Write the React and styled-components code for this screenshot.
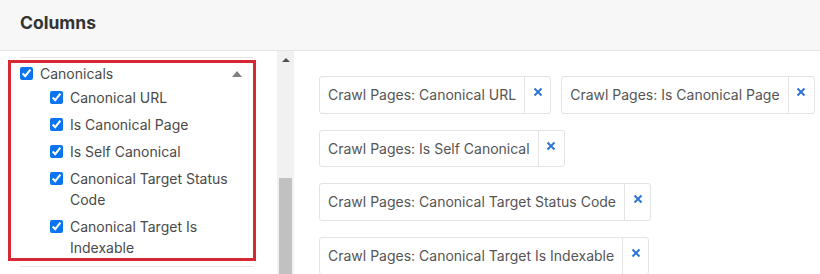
import React from "react";
import styled, { createGlobalStyle } from "styled-components";

const Global = createGlobalStyle`
  html, body { margin: 0; padding: 0; background: #fff; }
  body { font-family: Inter, "Noto Sans", "Liberation Sans", sans-serif; }
  * { box-sizing: border-box; }
`;

const Page = styled.div`
  width: 820px;
  height: 274px;
  overflow: hidden;
  display: flex;
  flex-direction: column;
`;

const Header = styled.header`
  height: 51px;
  flex: none;
  background: #f7f7f7;
  border-bottom: 1px solid #e6e6e6;
  display: flex;
  align-items: center;
  padding: 0 0 6px 20px;
`;

const Title = styled.h2`
  margin: 0;
  font-size: 17.5px;
  font-weight: 700;
  color: #333;
`;

const Body = styled.div`
  flex: 1;
  display: flex;
  min-height: 0;
`;

const LeftPane = styled.div`
  width: 277px;
  flex: none;
  display: flex;
  flex-direction: column;
  padding-top: 6px;
`;

const Separator = styled.div`
  height: 1px;
  background: #e6e6e6;
  width: 233px;
  margin-left: 20px;
  flex: none;
`;

const Highlight = styled.div`
  margin: 2px 0 5px 8px;
  width: 248px;
  border: 3px solid #d62832;
  padding: 0 13px 0 9px;
  flex: none;
`;

const Row = styled.label`
  display: flex;
  align-items: flex-start;
  padding-left: ${(p) => (p.$child ? "30px" : "0")};
  margin-bottom: ${(p) => p.$gap}px;
  font-size: 14px;
  line-height: 21px;
  color: #4a4a4a;
`;

const Check = styled.input.attrs({ type: "checkbox" })`
  margin: 4px 7px 0 0;
  width: 13px;
  height: 13px;
  flex: none;
  accent-color: #0a74f0;
`;

const Label = styled.span`
  flex: 1;
`;

const Caret = styled.span`
  flex: none;
  width: 0;
  height: 0;
  margin: 8px -2px 0 0;
  border-left: 5px solid transparent;
  border-right: 5px solid transparent;
  border-bottom: 6px solid #808080;
`;

const Scrollbar = styled.div`
  width: 17px;
  flex: none;
  background: #f1f1f1;
  display: flex;
  flex-direction: column;
  align-items: center;
`;

const ScrollArrow = styled.div`
  width: 0;
  height: 0;
  margin-top: 7px;
  border-left: 4px solid transparent;
  border-right: 4px solid transparent;
  border-bottom: 4px solid #505050;
`;

const Thumb = styled.div`
  width: 13px;
  flex: 1;
  margin-top: 116px;
  background: #c1c1c1;
`;

const RightPane = styled.div`
  flex: 1;
  display: flex;
  flex-wrap: wrap;
  align-content: flex-start;
  column-gap: 10px;
  row-gap: 16px;
  padding: 25px 0 0 25px;
  min-width: 0;
  overflow: hidden;
`;

const Tag = styled.div`
  display: flex;
  align-items: stretch;
  border: 1px solid #e3e3e3;
  border-radius: 3px;
  background: #fff;
  flex: none;
`;

const TagText = styled.span`
  padding: 8px 8px;
  font-size: 14px;
  line-height: 19.67px;
  color: #555;
  white-space: nowrap;
`;

const Remove = styled.button`
  width: 26px;
  border: 0;
  border-left: 1px solid #e3e3e3;
  background: transparent;
  padding: 10px 0 0 0;
  display: flex;
  justify-content: center;
  align-items: flex-start;
  cursor: pointer;
`;

const XIcon = () => (
  <svg width="10" height="10" viewBox="0 0 10 10">
    <path d="M1.5 1.5 L8.5 8.5 M8.5 1.5 L1.5 8.5" stroke="#2f74d8" strokeWidth="2" strokeLinecap="butt" />
  </svg>
);

const children = [
  "Canonical URL",
  "Is Canonical Page",
  "Is Self Canonical",
  "Canonical Target Status Code",
  "Canonical Target Is Indexable",
];

export default function App() {
  return (
    <Page>
      <Global />
      <Header>
        <Title>Columns</Title>
      </Header>
      <Body>
        <LeftPane>
          <Separator />
          <Highlight>
            <Row $gap={3}>
              <Check defaultChecked />
              <Label>Canonicals</Label>
              <Caret />
            </Row>
            {children.map((c, i) => (
              <Row key={c} $child $gap={i === children.length - 1 ? 0 : 6}>
                <Check defaultChecked />
                <Label>{c}</Label>
              </Row>
            ))}
          </Highlight>
          <Separator />
        </LeftPane>
        <Scrollbar>
          <ScrollArrow />
          <Thumb />
        </Scrollbar>
        <RightPane>
          {children.map((c) => (
            <Tag key={c}>
              <TagText>Crawl Pages: {c}</TagText>
              <Remove aria-label="Remove">
                <XIcon />
              </Remove>
            </Tag>
          ))}
        </RightPane>
      </Body>
    </Page>
  );
}
